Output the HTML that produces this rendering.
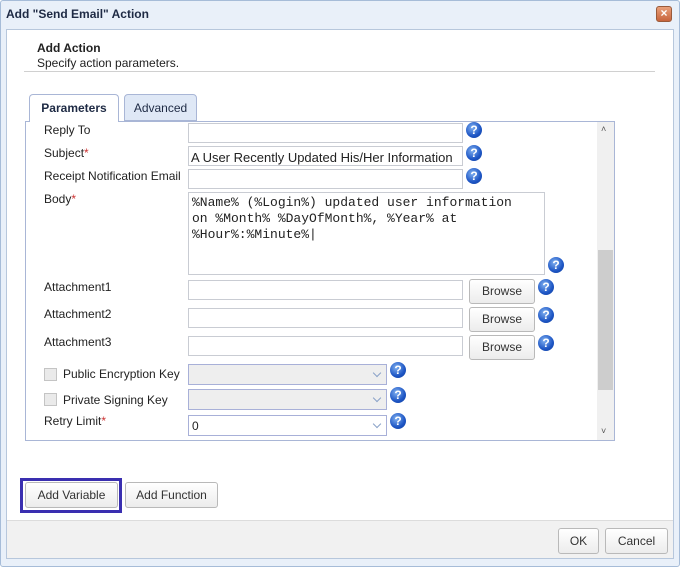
<!DOCTYPE html>
<html><head><style>
*{box-sizing:border-box;margin:0;padding:0}
body{width:680px;height:567px;background:#fff;font-family:"Liberation Sans",Arial,sans-serif;font-size:12px;color:#222;position:relative;overflow:hidden}
.a{position:absolute}
.inp{position:absolute;border:1px solid #c9ccd3;background:#fff;height:20px}
.help{position:absolute;width:16px;height:16px;border-radius:50%;background:radial-gradient(circle at 40% 35%,#7fb0f0,#1d55c4 60%,#123f9a);color:#fff;font-weight:bold;font-size:12px;line-height:16px;text-align:center}
.btn{position:absolute;border:1px solid #b9b9b9;border-radius:3px;background:linear-gradient(#fff,#ececec);text-align:center;font-size:12px;color:#333}
.lbl{position:absolute;left:44px;font-size:12px;color:#222}
.req{color:#c33}
.sel{position:absolute;border:1px solid #a8b0d8;height:21px;background:#eee}
.sel:after{content:"";position:absolute;right:6px;top:5px;width:5px;height:5px;border-right:1.5px solid #8aa2c8;border-bottom:1.5px solid #8aa2c8;transform:rotate(45deg)}
.cb{position:absolute;left:44px;width:13px;height:13px;border:1px solid #c4c4c4;background:#eaeaea}
</style></head><body>
<div class="a" style="left:0;top:0;width:680px;height:567px;border:1px solid #a6bcd8;border-radius:3px;background:#e9f0f9"></div>
<div class="a" style="left:6px;top:7px;font-weight:bold;font-size:12px;color:#1e2a44">Add "Send Email" Action</div>
<div class="a" style="left:656px;top:6px;width:16px;height:16px;border:1px solid #9a5a3a;border-radius:3px;background:linear-gradient(#e9a07a,#c7643c);color:#fff;font-size:12px;line-height:13px;text-align:center;font-weight:bold">×</div>
<div class="a" style="left:6px;top:29px;width:668px;height:530px;border:1px solid #b7c7dc;background:#fff"></div>
<div class="a" style="left:7px;top:520px;width:666px;height:38px;background:#f1f1f1;border-top:1px solid #dcdcdc"></div>
<div class="a" style="left:37px;top:41px;font-weight:bold;font-size:12px">Add Action</div>
<div class="a" style="left:37px;top:56px;font-size:12px">Specify action parameters.</div>
<div class="a" style="left:24px;top:71px;width:631px;height:1px;background:#d0d0d0"></div>
<div class="a" style="left:25px;top:121px;width:590px;height:320px;border:1px solid #a9b6d6"></div>
<div class="a" style="left:29px;top:94px;width:90px;height:28px;border:1px solid #a9b6d6;border-bottom:none;border-radius:4px 4px 0 0;background:#fff;text-align:center;line-height:26px;font-weight:bold;color:#1e2a44">Parameters</div>
<div class="a" style="left:124px;top:94px;width:73px;height:27px;border:1px solid #a9b6d6;border-radius:4px 4px 0 0;background:#dfe8f6;text-align:center;line-height:26px;color:#1e2a44">Advanced</div>
<div class="a" style="left:597px;top:122px;width:17px;height:318px;background:#f0f0f0"></div>
<div class="a" style="left:598px;top:250px;width:15px;height:140px;background:#cdcdcd"></div>
<div class="a" style="left:601px;top:124px;font-size:9px;color:#555">˄</div>
<div class="a" style="left:601px;top:426px;font-size:9px;color:#555">˅</div>
<div class="lbl" style="top:123px">Reply To</div>
<div class="inp" style="left:188px;top:123px;width:275px"></div><div class="help" style="left:466px;top:122px">?</div>
<div class="lbl" style="top:146px">Subject<span class="req">*</span></div>
<div class="inp" style="left:188px;top:146px;width:275px;font-size:13px;padding:2px 2px;line-height:17px">A User Recently Updated His/Her Information</div><div class="help" style="left:466px;top:145px">?</div>
<div class="lbl" style="top:169px">Receipt Notification Email</div>
<div class="inp" style="left:188px;top:169px;width:275px"></div><div class="help" style="left:466px;top:168px">?</div>
<div class="lbl" style="top:192px">Body<span class="req">*</span></div>
<div class="inp" style="left:188px;top:192px;width:357px;height:83px;font-family:'Liberation Mono',monospace;font-size:13px;line-height:16px;padding:2px 3px;white-space:nowrap">%Name% (%Login%) updated user information<br>on %Month% %DayOfMonth%, %Year% at<br>%Hour%:%Minute%|</div>
<div class="help" style="left:548px;top:257px">?</div>
<div class="lbl" style="top:280px">Attachment1</div>
<div class="inp" style="left:188px;top:280px;width:275px"></div><div class="btn" style="left:469px;top:279px;width:66px;height:25px;line-height:23px">Browse</div><div class="help" style="left:538px;top:279px">?</div>
<div class="lbl" style="top:307px">Attachment2</div>
<div class="inp" style="left:188px;top:308px;width:275px"></div><div class="btn" style="left:469px;top:307px;width:66px;height:25px;line-height:23px">Browse</div><div class="help" style="left:538px;top:307px">?</div>
<div class="lbl" style="top:335px">Attachment3</div>
<div class="inp" style="left:188px;top:336px;width:275px"></div><div class="btn" style="left:469px;top:335px;width:66px;height:25px;line-height:23px">Browse</div><div class="help" style="left:538px;top:335px">?</div>
<div class="cb" style="top:368px"></div><div class="a" style="left:63px;top:367px">Public Encryption Key</div>
<div class="sel" style="left:188px;top:364px;width:199px"></div><div class="help" style="left:390px;top:362px">?</div>
<div class="cb" style="top:393px"></div><div class="a" style="left:63px;top:393px">Private Signing Key</div>
<div class="sel" style="left:188px;top:389px;width:199px"></div><div class="help" style="left:390px;top:387px">?</div>
<div class="lbl" style="top:414px">Retry Limit<span class="req">*</span></div>
<div class="sel" style="left:188px;top:415px;width:199px;background:#fff;padding:3px 3px;font-size:12px">0</div><div class="help" style="left:390px;top:413px">?</div>
<div class="a" style="left:20px;top:478px;width:102px;height:35px;border:3px solid #3a2fb0"></div>
<div class="btn" style="left:25px;top:482px;width:93px;height:26px;line-height:24px">Add Variable</div>
<div class="btn" style="left:125px;top:482px;width:93px;height:26px;line-height:24px">Add Function</div>
<div class="btn" style="left:558px;top:528px;width:41px;height:26px;line-height:24px">OK</div>
<div class="btn" style="left:605px;top:528px;width:63px;height:26px;line-height:24px">Cancel</div>
</body></html>
